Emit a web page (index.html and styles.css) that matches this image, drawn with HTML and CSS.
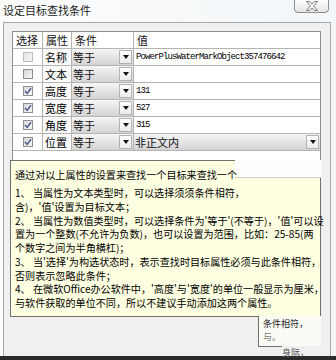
FILE: index.html
```html
<!DOCTYPE html>
<html lang="zh-CN">
<head>
    <meta charset="UTF-8">
    <title>设定目标查找条件</title>
    <link rel="stylesheet" href="styles.css">
</head>
<body>
    <div class="window">
        <div class="titlebar">
            <span class="title">设定目标查找条件</span>
            <div class="close-btn">
                <svg width="12" height="10" viewBox="0 0 12 10">
                    <polygon points="0.5,0.5 3.5,0.5 6,3.2 8.5,0.5 11.5,0.5 7.6,5 11.5,9.5 8.5,9.5 6,6.8 3.5,9.5 0.5,9.5 4.4,5" fill="#fff" stroke="#6a6a6a" stroke-width="0.9"/>
                </svg>
            </div>
        </div>

        <div class="client">
            <div class="grid">
                <div class="row head">
                    <div class="cell">选择</div>
                    <div class="cell">属性</div>
                    <div class="cell">条件</div>
                    <div class="cell">值</div>
                </div>
                <div class="row">
                    <div class="cell check"><span class="box disabled"></span></div>
                    <div class="cell name">名称</div>
                    <div class="cell"><div class="combo">等于<span class="drop"></span></div></div>
                    <div class="cell value">PowerPlusWaterMarkObject357476642</div>
                </div>
                <div class="row">
                    <div class="cell check"><span class="box"></span></div>
                    <div class="cell name">文本</div>
                    <div class="cell"><div class="combo">等于<span class="drop"></span></div></div>
                    <div class="cell value"></div>
                </div>
                <div class="row">
                    <div class="cell check"><span class="box checked"><svg width="8" height="8" viewBox="0 0 8 8"><polyline points="1,4 3.2,6.4 7,1.2" fill="none" stroke="#4b5d8c" stroke-width="1.5"/></svg></span></div>
                    <div class="cell name">高度</div>
                    <div class="cell"><div class="combo">等于<span class="drop"></span></div></div>
                    <div class="cell value">131</div>
                </div>
                <div class="row">
                    <div class="cell check"><span class="box checked"><svg width="8" height="8" viewBox="0 0 8 8"><polyline points="1,4 3.2,6.4 7,1.2" fill="none" stroke="#4b5d8c" stroke-width="1.5"/></svg></span></div>
                    <div class="cell name">宽度</div>
                    <div class="cell"><div class="combo">等于<span class="drop"></span></div></div>
                    <div class="cell value">527</div>
                </div>
                <div class="row">
                    <div class="cell check"><span class="box checked"><svg width="8" height="8" viewBox="0 0 8 8"><polyline points="1,4 3.2,6.4 7,1.2" fill="none" stroke="#4b5d8c" stroke-width="1.5"/></svg></span></div>
                    <div class="cell name">角度</div>
                    <div class="cell"><div class="combo">等于<span class="drop"></span></div></div>
                    <div class="cell value">315</div>
                </div>
                <div class="row">
                    <div class="cell check"><span class="box checked"><svg width="8" height="8" viewBox="0 0 8 8"><polyline points="1,4 3.2,6.4 7,1.2" fill="none" stroke="#4b5d8c" stroke-width="1.5"/></svg></span></div>
                    <div class="cell name">位置</div>
                    <div class="cell"><div class="combo">等于<span class="drop"></span></div></div>
                    <div class="cell"><div class="combo">非正文内<span class="drop"></span></div></div>
                </div>
            </div>

            <!-- 提示框 -->
            <div class="tip">
                <span class="tip-gap"></span>
                <p class="lead">通过对以上属性的设置来查找一个目标来查找一个</p>
                <p>1、 当属性为文本类型时，可以选择须须条件相符，<br>含)，'值'设置为目标文本；</p>
                <p>2、 当属性为数值类型时，可以选择条件为'等于'(不等于)，'值'可以设<br>置为一个整数(不允许为负数)，也可以设置为范围，比如：25-85(两<br>个数字之间为半角横杠)；</p>
                <p>3、 当'选择'为构选状态时，表示查找时目标属性必须与此条件相符，<br>否则表示忽略此条件；</p>
                <p>4、 在微软Office办公软件中，'高度'与'宽度'的单位一般显示为厘米，<br>与软件获取的单位不同，所以不建议手动添加这两个属性。</p>
            </div>
            <div class="tip-piece">
                <span>条件相符，</span>
                <span class="faint">与。</span>
            </div>
            <div class="tip-tail">身际，</div>
        </div>
        <div class="bottom-edge"></div>
    </div>
</body>
</html>
```

FILE: styles.css
```css
/* Okno dialogowe */
body {
    margin: 0;
    background-color: #fff;
    color: #000;
    font-family: "Noto Sans CJK SC", sans-serif;
}
.window {
    width: 336px;
    height: 360px;
    display: flex;
    flex-direction: column;
    background: linear-gradient(to right, #fdfdfd, #f2f6f9);
    overflow: hidden;
}
.titlebar {
    height: 22px;
    position: relative;
    flex-shrink: 0;
}
.title {
    display: block;
    padding-left: 3px;
    font-size: 11px;
    line-height: 20px;
    color: #222;
}
.close-btn {
    position: absolute;
    top: -1px;
    right: 7px;
    width: 35px;
    height: 14px;
    border: 1px solid #8e8e8e;
    border-radius: 0 0 4px 4px;
    background: linear-gradient(#ffffff, #e4e4e4);
    display: flex;
    align-items: center;
    justify-content: center;
    box-sizing: border-box;
}
.client {
    flex: 1;
    position: relative;
    margin: 0 5px 0 3px;
    padding: 8px 9px 0 8px;
    border: 1px solid #a8a8a8;
    border-bottom: none;
    background-color: #f0f0f0;
}
.bottom-edge {
    height: 4px;
    background-color: #2a2a2a;
    flex-shrink: 0;
}
/* Tabela */
.grid {
    height: 190px;
    background-color: #fff;
    border: 1px solid #8a8d93;
}
.row {
    display: grid;
    grid-template-columns: 30px 29px 62px 1fr;
    height: 17px;
}
.cell {
    box-sizing: border-box;
    border-right: 1px solid #b4b4b4;
    border-bottom: 1px solid #b4b4b4;
    font-size: 11px;
    line-height: 16px;
    overflow: hidden;
    white-space: nowrap;
}
.cell:last-child {
    border-right: none;
}
.head .cell {
    padding-left: 3px;
    color: #111;
}
.name {
    padding-left: 2px;
    background-color: #fbfbfb;
}
.check {
    display: flex;
    align-items: center;
    justify-content: center;
}
.box {
    width: 10px;
    height: 10px;
    box-sizing: border-box;
    border: 1px solid #8f9090;
    background: linear-gradient(135deg, #d8d8d8, #f7f7f7);
    display: flex;
    align-items: center;
    justify-content: center;
}
.box.disabled {
    border-color: #bdbdbd;
    background: linear-gradient(135deg, #e4e4e4, #f4f4f4);
}
.combo {
    height: 16px;
    display: flex;
    align-items: center;
    justify-content: space-between;
    padding-left: 1px;
    background: linear-gradient(#f6f6f6, #d3d3d3);
    font-size: 11px;
    line-height: 16px;
    color: #111;
}
.drop {
    width: 13px;
    height: 14px;
    margin-right: 1px;
    box-sizing: border-box;
    border: 1px solid #b3b3b3;
    background: linear-gradient(#ffffff, #ececec);
    display: flex;
    align-items: center;
    justify-content: center;
}
.drop::after {
    content: "";
    border-left: 3px solid transparent;
    border-right: 3px solid transparent;
    border-top: 4px solid #111;
}
.value {
    padding-left: 2px;
    font-family: "Liberation Mono", monospace;
    font-size: 9px;
    letter-spacing: -0.9px;
    line-height: 16px;
}
/* Podpowiedź */
.tip {
    position: absolute;
    left: 6px;
    top: 137px;
    width: 311px;
    height: 157px;
    box-sizing: border-box;
    padding: 7px 0 0 4px;
    border: 1px solid #6f6f6f;
    background-color: #ffffe1;
    font-size: 10.1px;
    line-height: 13.75px;
    white-space: nowrap;
}
.tip p {
    margin: 0;
    position: relative;
}
.tip .lead {
    margin-bottom: 4.25px;
}
.tip-gap {
    position: absolute;
    left: 224px;
    top: -1px;
    right: -1px;
    height: 17px;
    background-color: #fefefe;
    border-bottom: 1px solid #d0d0c0;
}
.tip-piece {
    position: absolute;
    left: 254px;
    top: 293px;
    width: 63px;
    height: 30px;
    box-sizing: border-box;
    padding: 1px 0 0 4px;
    border-left: 1px solid #6f6f6f;
    background-color: #fbfbf6;
    font-size: 9px;
    line-height: 13px;
    color: #222;
    display: flex;
    flex-direction: column;
}
.tip-piece .faint {
    color: #777;
}
.tip-tail {
    position: absolute;
    left: 254px;
    top: 323px;
    padding-left: 24px;
    border-top: 1px solid #6f6f6f;
    width: 0;
    font-size: 9px;
    line-height: 12px;
    color: #555;
    white-space: nowrap;
}
```
